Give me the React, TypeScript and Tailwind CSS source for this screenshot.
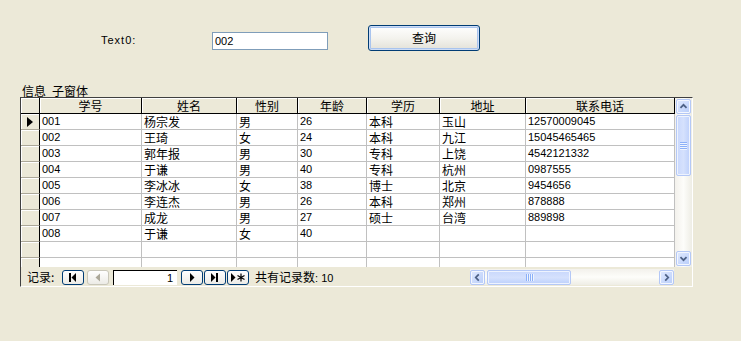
// Access-style subform: a query box on top, a datasheet subform below with the
// record navigator and XP scrollbars. Fixed pixel grid to match the old form.

const COLS = [102, 95, 61, 69, 73, 86, 149];
const HEADERS = ['学号', '姓名', '性别', '年龄', '学历', '地址', '联系电话'];

const ROWS: string[][] = [
  ['001', '杨宗发', '男', '26', '本科', '玉山', '12570009045'],
  ['002', '王琦', '女', '24', '本科', '九江', '15045465465'],
  ['003', '郭年报', '男', '30', '专科', '上饶', '4542121332'],
  ['004', '于谦', '男', '40', '专科', '杭州', '0987555'],
  ['005', '李冰冰', '女', '38', '博士', '北京', '9454656'],
  ['006', '李连杰', '男', '26', '本科', '郑州', '878888'],
  ['007', '成龙', '男', '27', '硕士', '台湾', '889898'],
  ['008', '于谦', '女', '40', '', '', ''],
  ['', '', '', '', '', '', ''],
  ['', '', '', '', '', '', ''],
];

const isAscii = (s: string) => /^[\x00-\x7f]*$/.test(s);

export default function App() {
  return (
    <div className="w-[741px] h-[341px] overflow-hidden bg-[#ECE9D8] text-black font-['Liberation_Sans','Noto_Sans_CJK_SC',sans-serif]">
      {/* query row */}
      <div className="flex items-start pt-[25px] h-[51px]">
        <div className="ml-[101px] mt-[9px] w-[111px] h-[13px] leading-[13px] text-[11px] tracking-[1px]">
          Text0:
        </div>
        <div className="mt-[7px] w-[116px] h-[18px] border border-[#7F9DB9] bg-white pl-[2px] text-[11px] leading-[16px]">
          002
        </div>
        <button className="ml-[40px] w-[112px] h-[26px] rounded-[3px] border border-[#003C74] bg-gradient-to-b from-white via-[#F4F3EE] to-[#E3E1D8] shadow-[inset_0_0_0_1px_#CEDDF6,inset_0_0_0_2px_#A9C4EE] text-[12px] leading-[24px] pb-[2px] font-['Noto_Sans_CJK_SC',sans-serif]">
          查询
        </button>
      </div>

      <div className="mt-[33px] ml-[22px] h-[13px] flex gap-[6px] leading-[13px] text-[12px] font-['Noto_Sans_CJK_SC',sans-serif]">
        <span>信息</span>
        <span>子窗体</span>
      </div>

      {/* subform frame */}
      <div className="ml-[20px] w-[673px] h-[190px] border-t border-l border-[#404040] border-r border-r-white border-b border-b-white flex flex-col">
        <div className="flex h-[169px]">
          <div className="w-[654px] h-[169px] overflow-hidden bg-white">
            <div className="flex h-[16px]">
              <div className="w-[19px] shrink-0 bg-[#ECE9D8] border-r border-b border-black shadow-[inset_1px_1px_0_#fff]" />
              {HEADERS.map((h, i) => (
                <div
                  key={h}
                  style={{ width: COLS[i] }}
                  className="shrink-0 bg-[#ECE9D8] border-r border-b border-black shadow-[inset_1px_1px_0_#fff] text-center text-[12px] leading-[15px] font-['Noto_Sans_CJK_SC',sans-serif]"
                >
                  {h}
                </div>
              ))}
            </div>
            {ROWS.map((r, ri) => (
              <div key={ri} className="flex h-[16px]">
                <div className="w-[19px] shrink-0 bg-[#ECE9D8] border-r border-r-black border-b border-b-[#ACA899] shadow-[inset_1px_1px_0_#fff] flex items-center justify-center">
                  {ri === 0 && (
                    <svg width="6" height="10" viewBox="0 0 6 10">
                      <path d="M0 0 L6 5 L0 10 Z" fill="#000" />
                    </svg>
                  )}
                </div>
                {r.map((v, ci) => (
                  <div
                    key={ci}
                    style={{ width: COLS[ci] }}
                    className={`shrink-0 border-r border-b border-[#C0C0C0] pl-[2px] leading-[15px] whitespace-nowrap overflow-hidden ${
                      isAscii(v) ? 'text-[11px]' : "text-[12px] font-['Noto_Sans_CJK_SC',sans-serif]"
                    }`}
                  >
                    {v}
                  </div>
                ))}
              </div>
            ))}
          </div>
          <VScroll />
        </div>

        {/* record navigator */}
        <div className="flex items-center h-[19px] bg-[#ECE9D8] border-t border-[#ECE9D8]">
          <span className="ml-[6px] w-[35px] text-[12px] leading-[14px] font-['Noto_Sans_CJK_SC',sans-serif]">记录:</span>
          <NavBtn kind="first" />
          <div className="ml-[3px]">
            <NavBtn kind="prev" disabled />
          </div>
          <div className="ml-[4px] w-[64px] h-[15px] bg-white border-t border-l border-black text-right pr-[4px] text-[11px] leading-[14px]">
            1
          </div>
          <div className="ml-[4px]">
            <NavBtn kind="next" />
          </div>
          <div className="ml-[1px]">
            <NavBtn kind="last" />
          </div>
          <div className="ml-[1px]">
            <NavBtn kind="new" />
          </div>
          <span className="ml-[6px] text-[12px] leading-[14px] font-['Noto_Sans_CJK_SC',sans-serif]">
            共有记录数<span className="text-[11px] font-['Liberation_Sans',sans-serif]">: 10</span>
          </span>
          <HScroll />
        </div>
      </div>
    </div>
  );
}

function NavBtn({ kind, disabled = false }: { kind: 'first' | 'prev' | 'next' | 'last' | 'new'; disabled?: boolean }) {
  const c = disabled ? '#ACA899' : '#000';
  return (
    <div
      className={`w-[22px] h-[15px] rounded-[3px] border flex items-center justify-center bg-gradient-to-b from-white to-[#ECEBE6] ${
        disabled ? 'border-[#C9C7BA]' : 'border-[#003C74]'
      }`}
    >
      <svg width="16" height="11" viewBox="0 0 16 11">
        {kind === 'first' && (
          <>
            <rect x="4" y="1" width="2" height="9" fill={c} />
            <path d="M11 1 L6.5 5.5 L11 10 Z" fill={c} />
          </>
        )}
        {kind === 'prev' && <path d="M10 1.5 L5.5 5.5 L10 9.5 Z" fill={c} />}
        {kind === 'next' && <path d="M6 1 L10.5 5.5 L6 10 Z" fill={c} />}
        {kind === 'last' && (
          <>
            <path d="M4 1 L8.5 5.5 L4 10 Z" fill={c} />
            <rect x="9" y="1" width="2" height="9" fill={c} />
          </>
        )}
        {kind === 'new' && (
          <>
            <path d="M1 1 L5.5 5.5 L1 10 Z" fill={c} />
            <path d="M11 1.5 V9.5 M7.5 3.5 L14.5 7.5 M7.5 7.5 L14.5 3.5" stroke={c} strokeWidth="1.2" />
          </>
        )}
      </svg>
    </div>
  );
}

function ScrollBtn({ dir }: { dir: 'up' | 'down' | 'left' | 'right' }) {
  const d = {
    up: 'M4 9 L7.5 5.5 L11 9',
    down: 'M4 6 L7.5 9.5 L11 6',
    left: 'M9 4 L5.5 7.5 L9 11',
    right: 'M6 4 L9.5 7.5 L6 11',
  }[dir];
  return (
    <div className="w-[15px] h-[15px] rounded-[2px] border border-[#B4C8F6] bg-gradient-to-br from-[#E1EAFE] to-[#B8CDFA] flex items-center justify-center shadow-[inset_0_0_0_1px_#F4F7FE]">
      <svg width="15" height="15" viewBox="0 0 15 15">
        <path d={d} stroke="#4D6185" strokeWidth="2" fill="none" />
      </svg>
    </div>
  );
}

function VScroll() {
  return (
    <div className="w-[17px] h-[169px] flex flex-col items-center bg-gradient-to-r from-[#F3F1EC] via-[#FDFDFA] to-[#EEEDE5] py-px">
      <ScrollBtn dir="up" />
      <div className="mt-[1px] w-[15px] h-[61px] rounded-[2px] border border-[#B4C8F6] bg-gradient-to-r from-[#C9D8FC] via-[#D5E1FD] to-[#BDD0FB] shadow-[inset_0_0_0_1px_#EEF3FE] flex flex-col items-center justify-center gap-[1px]">
        {[0, 1, 2, 3].map((i) => (
          <div key={i} className="w-[7px] h-[1px] bg-[#8CB0F8] shadow-[0_1px_0_#EEF4FE]" />
        ))}
      </div>
      <div className="flex-1" />
      <ScrollBtn dir="down" />
    </div>
  );
}

function HScroll() {
  return (
    <div className="ml-auto mr-[18px] w-[204px] h-[16px] flex items-center bg-gradient-to-b from-[#F3F1EC] via-[#FDFDFA] to-[#EEEDE5]">
      <ScrollBtn dir="left" />
      <div className="ml-[2px] w-[84px] h-[15px] rounded-[2px] border border-[#B4C8F6] bg-gradient-to-b from-[#C9D8FC] via-[#D5E1FD] to-[#BDD0FB] shadow-[inset_0_0_0_1px_#EEF3FE] flex items-center justify-center gap-[1px]">
        {[0, 1, 2, 3].map((i) => (
          <div key={i} className="w-[1px] h-[7px] bg-[#8CB0F8] shadow-[1px_0_0_#EEF4FE]" />
        ))}
      </div>
      <div className="flex-1" />
      <ScrollBtn dir="right" />
    </div>
  );
}
